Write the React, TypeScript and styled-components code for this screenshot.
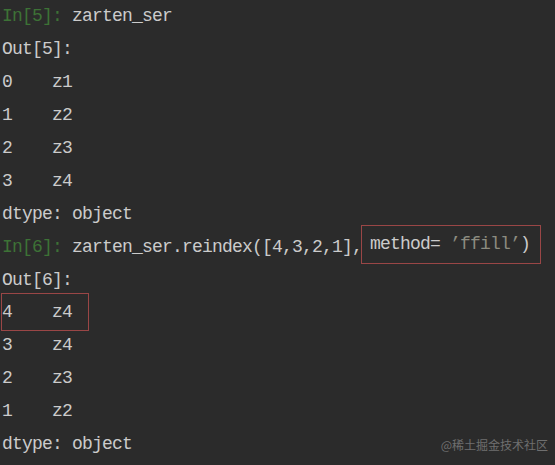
import React from "react";
import styled, { createGlobalStyle } from "styled-components";

const Global = createGlobalStyle`
  html, body {
    margin: 0;
    padding: 0;
    background: #2b2b2b;
  }
`;

const Console = styled.div`
  width: 555px;
  height: 465px;
  box-sizing: border-box;
  background: #2b2b2b;
  padding: 0 0 0 2px;
  font-family: "Liberation Mono", "DejaVu Sans Mono", monospace;
  font-size: 18px;
  letter-spacing: -0.8px;
  color: #cbcbcb;
  position: relative;
  overflow: hidden;
`;

const Line = styled.div`
  height: 32.9px;
  display: flex;
  align-items: center;
  white-space: pre;
`;

const Prompt = styled.span`
  color: #3d7236;
`;

const Dim = styled.span`
  color: #8c8c80;
`;

const Box = styled.span<{ $pl: number; $pr: number; $h: number; $shift: number; $ml: number }>`
  display: flex;
  align-items: center;
  box-sizing: border-box;
  height: ${(p) => p.$h}px;
  padding: 0 ${(p) => p.$pr}px 0 ${(p) => p.$pl}px;
  margin-left: ${(p) => p.$ml}px;
  border: 1px solid #9a4646;
  margin-top: ${(p) => p.$shift}px;
`;

const Watermark = styled.div`
  position: absolute;
  right: 7px;
  bottom: 12px;
  font-family: "Noto Sans CJK SC", "Noto Sans", sans-serif;
  font-size: 12px;
  letter-spacing: 0;
  color: #6f6f6f;
`;

export default function App() {
  return (
    <>
      <Global />
      <Console>
        <Line>
          <Prompt>In[5]:</Prompt> zarten_ser
        </Line>
        <Line>Out[5]:</Line>
        <Line>0    z1</Line>
        <Line>1    z2</Line>
        <Line>2    z3</Line>
        <Line>3    z4</Line>
        <Line>dtype: object</Line>
        <Line>
          <Prompt>In[6]:</Prompt> zarten_ser.reindex([4,3,2,1],
          <Box $pl={8} $pr={10} $h={39} $shift={-5} $ml={-1}>
            method= <Dim>’ffill’</Dim>)
          </Box>
        </Line>
        <Line>Out[6]:</Line>
        <Line>
          <Box $pl={0} $pr={16} $h={38} $shift={0} $ml={-1}>
            4    z4
          </Box>
        </Line>
        <Line>3    z4</Line>
        <Line>2    z3</Line>
        <Line>1    z2</Line>
        <Line>dtype: object</Line>
        <Watermark>@稀土掘金技术社区</Watermark>
      </Console>
    </>
  );
}
